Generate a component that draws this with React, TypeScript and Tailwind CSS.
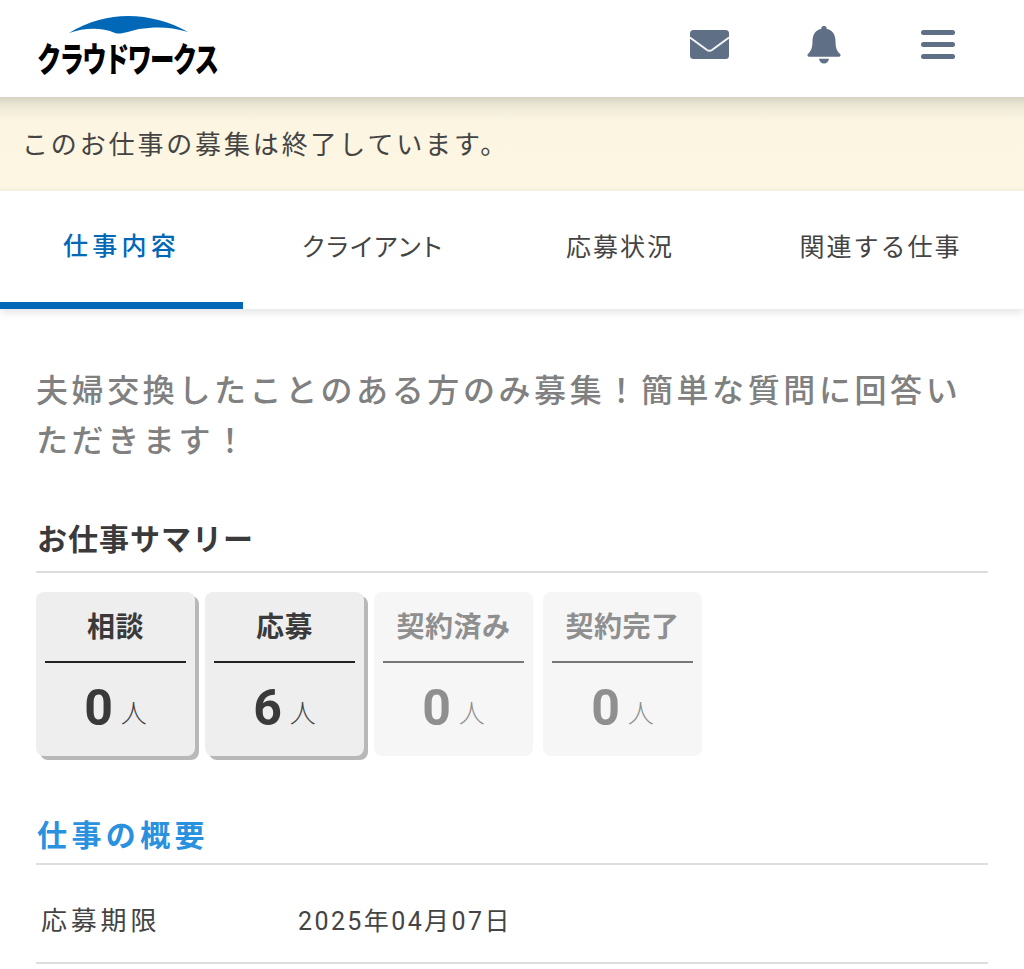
import React from 'react';

const FONT = 'font-["Roboto","Noto_Sans_CJK_JP",sans-serif]';

const tabs = [
  { label: '仕事内容', width: 'w-[243px]', active: true },
  { label: 'クライアント', width: 'w-[260px]', active: false },
  { label: '応募状況', width: 'w-[234px]', active: false },
  { label: '関連する仕事', width: 'w-[287px]', active: false },
];

const stats = [
  { label: '相談', count: 0, on: true },
  { label: '応募', count: 6, on: true },
  { label: '契約済み', count: 0, on: false },
  { label: '契約完了', count: 0, on: false },
];

const Logo = () => (
  <div className="relative w-[190px] h-[80px] ml-[37px]">
    <svg viewBox="0 0 120 18" className="absolute left-[32px] top-[7px] w-[120px] h-[18px]">
      <path d="M0 17 C20 5 40 0 59 0 C80 0 102 6 119 16 C100 10 85 11 70 13 C60 15 52 19 46 17 C32 11 15 12 0 17 Z" fill="#0068b7" />
    </svg>
    <span className="absolute left-0 top-[29px] text-[34px] leading-[44px] font-black text-black tracking-[-2.6px] scale-x-[0.72] origin-left whitespace-nowrap">
      クラウドワークス
    </span>
  </div>
);

const MailIcon = () => (
  <svg viewBox="0 0 39 29" className="w-[39px] h-[29px]">
    <rect x="0" y="0" width="39" height="29" rx="3.5" fill="#5f6f85" />
    <path d="M0 7.5 L17 20 Q19.5 21.5 22 20 L39 7.5" fill="none" stroke="#f4f5f7" strokeWidth="2" />
  </svg>
);

const BellIcon = () => (
  <svg viewBox="0 0 34 38" className="w-[34px] h-[38px]">
    <path
      d="M17 0 a2.6 2.6 0 0 1 2.6 2.8 C26 4.2 28.5 9.5 28.5 15 C28.5 22 30 25 33 28 a1.6 1.6 0 0 1 -1 2.8 H2 a1.6 1.6 0 0 1 -1 -2.8 C4 25 5.5 22 5.5 15 C5.5 9.5 8 4.2 14.4 2.8 A2.6 2.6 0 0 1 17 0 Z"
      fill="#5f6f85"
    />
    <path d="M12 32.8 H22 C21.5 36 19.5 37.5 17 37.5 C14.5 37.5 12.5 36 12 32.8 Z" fill="#5f6f85" />
  </svg>
);

const MenuIcon = () => (
  <div className="flex flex-col gap-[7px] w-[34px]">
    <div className="h-[5px] rounded-full bg-[#5f6f85]" />
    <div className="h-[5px] rounded-full bg-[#5f6f85]" />
    <div className="h-[5px] rounded-full bg-[#5f6f85]" />
  </div>
);

const StatCard = ({ label, count, on }: { label: string; count: number; on: boolean }) => (
  <div
    className={`w-[159px] h-[164px] rounded-[8px] px-[9px] flex flex-col ${
      on ? 'bg-[#eeeeee] shadow-[4px_4px_0_#b8b8b8] text-[#3a3a3a]' : 'bg-[#f6f6f6] text-[#8f8f8f]'
    }`}
  >
    <div
      className={`h-[71px] flex items-center justify-center pt-[2px] border-b-2 text-[28px] font-bold tracking-[0.5px] ${
        on ? 'border-[#222222]' : 'border-[#777777]'
      }`}
    >
      {label}
    </div>
    <div className="flex-1 flex items-center justify-center pb-[4px]">
      <span className="text-[50px] leading-none font-bold">{count}</span>
      <span className={`ml-[8px] mt-[12px] text-[26px] leading-none font-light ${on ? 'text-[#444444]' : 'text-[#8f8f8f]'}`}>人</span>
    </div>
  </div>
);

export default function App() {
  return (
    <div className={`${FONT} w-[1024px] h-[969px] overflow-hidden bg-white`}>
      <header className="relative z-20 h-[97px] bg-white flex items-center justify-between">
        <Logo />
        <div className="flex items-center mr-[69px] mb-[8px]">
          <MailIcon />
          <div className="ml-[78px] mr-[80px]">
            <BellIcon />
          </div>
          <MenuIcon />
        </div>
      </header>

      <div className="h-[94px] bg-[linear-gradient(to_bottom,#d6d3c3_0px,#e6e2d0_6px,#f3eedb_14px,#fbf5e2_24px,#fcf6e3_88px,#f7f2e1_94px)] flex items-center pl-[22px] pt-[3px] text-[26px] tracking-[2.85px] text-[#444444]">
        このお仕事の募集は終了しています。
      </div>

      <nav className="relative z-10 h-[118px] flex bg-white shadow-[0_4px_8px_rgba(0,0,0,0.1)]">
        {tabs.map((t) => (
          <div
            key={t.label}
            className={`${t.width} flex items-center justify-center pb-[4px] text-[25px] ${
              t.active
                ? 'border-b-[7px] border-[#0068b7] text-[#0068b7] font-medium tracking-[4.3px] pt-[4px] pb-0'
                : 'text-[#444444] tracking-[2px]'
            } ${t.label === 'クライアント' ? '[font-feature-settings:"palt"]' : ''}`}
          >
            {t.label}
          </div>
        ))}
      </nav>

      <main className="px-[36px]">
        <h1 className="mt-[57px] text-[32px] leading-[50px] font-medium tracking-[3.6px] text-[#808080]">
          夫婦交換したことのある方のみ募集！簡単な質問に回答いただきます！
        </h1>

        <h2 className="mt-[53px] pb-[10px] border-b-2 border-[#dddddd] text-[30px] leading-[42px] font-bold tracking-[1px] text-[#3a3a3a] pl-[1px]">
          お仕事サマリー
        </h2>

        <div className="mt-[19px] flex gap-[10px]">
          {stats.map((s) => (
            <StatCard key={s.label} {...s} />
          ))}
        </div>

        <h2 className="mt-[58px] pb-[5px] border-b-2 border-[#dddddd] text-[30px] leading-[44px] font-bold tracking-[4.4px] text-[#2a91df] pl-[1px]">
          仕事の概要
        </h2>

        <div className="h-[99px] flex items-center border-b-2 border-[#dddddd] pl-[5px] pt-[16px] text-[25px] text-[#444444]">
          <span className="w-[257px] text-[26px] tracking-[3.8px]">応募期限</span>
          <span className="tracking-[2.4px]">2025年04月07日</span>
        </div>
      </main>
    </div>
  );
}
